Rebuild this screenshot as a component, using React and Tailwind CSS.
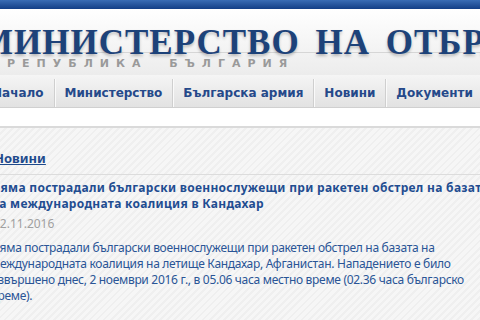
import React from "react";

const navItems = ["Начало", "Министерство", "Българска армия", "Новини", "Документи"];

const App = () => {
  return (
    <div className="w-[480px] h-[320px] overflow-hidden bg-white font-['DejaVu_Sans',Verdana,sans-serif]">
      {/* top strip */}
      <div className="h-[9px] bg-gradient-to-b from-[#3a6db5] to-[#133f86]" />

      {/* header */}
      <div className="h-[66px] bg-gradient-to-b from-white to-[#ececec]">
        <div className="pt-[20px] ml-[-20px] whitespace-nowrap font-['Liberation_Serif',serif] font-bold text-[35px] leading-[28px] tracking-[1px] [word-spacing:6px] text-[#1d4279] [text-shadow:0_2px_3px_rgba(0,0,0,0.25)]">
          МИНИСТЕРСТВО НА ОТБРАНАТА
        </div>
        <div className="mt-[-5px] h-px bg-[#d6d6d6]" />
        <div className="mt-[5px] ml-[7px] whitespace-nowrap font-['DejaVu_Sans',sans-serif] font-bold text-[11px] leading-[12px] tracking-[7px] text-[#9a9a9a]">
          РЕПУБЛИКА&nbsp;&nbsp;БЪЛГАРИЯ
        </div>
      </div>

      {/* nav */}
      <div className="h-[33px] flex ml-[-18px] pt-[4px] bg-gradient-to-b from-[#f5f5f5] to-[#e2e2e2] border-b border-[#d0d0d0] whitespace-nowrap">
        {navItems.map((item) => (
          <div
            key={item}
            className="flex items-center px-[10px] border-r border-[#cfcfcf] shadow-[1px_0_0_#fafafa] text-[12px] font-bold text-[#25498a]"
          >
            {item}
          </div>
        ))}
      </div>

      <div className="h-[18px] bg-white" />

      {/* content */}
      <div className="h-[200px] border-t-2 border-[#dadada] bg-[repeating-linear-gradient(135deg,#f6f6f6_0px,#f6f6f6_3px,#efefef_3px,#efefef_5px)] font-['Noto_Sans',Tahoma,sans-serif]">
        <div className="pt-[22px] ml-[-6px] text-[13px] leading-[16px] font-bold text-[#1e4a8c] underline">
          Новини
        </div>
        <div className="mt-[8px] h-px bg-[#dcdcdc]" />
        <div className="ml-[-9px] mt-[5px] whitespace-nowrap text-[12px] leading-[16px] tracking-[0.3px] font-bold text-[#1f4d91]">
          Няма пострадали български военнослужещи при ракетен обстрел на базата
          <br />
          на международната коалиция в Кандахар
        </div>
        <div className="ml-[-7px] mt-[4px] text-[12px] leading-[16px] text-[#a0a0a0]">02.11.2016</div>
        <div className="ml-[-9px] mt-[8px] whitespace-nowrap text-[12px] leading-[16px] tracking-[-0.3px] text-[#2a5596]">
          Няма пострадали български военнослужещи при ракетен обстрел на базата на
          <br />
          международната коалиция на летище Кандахар, Афганистан. Нападението е било
          <br />
          извършено днес, 2 ноември 2016 г., в 05.06 часа местно време (02.36 часа българско
          <br />
          време).
        </div>
      </div>
    </div>
  );
};

export default App;
